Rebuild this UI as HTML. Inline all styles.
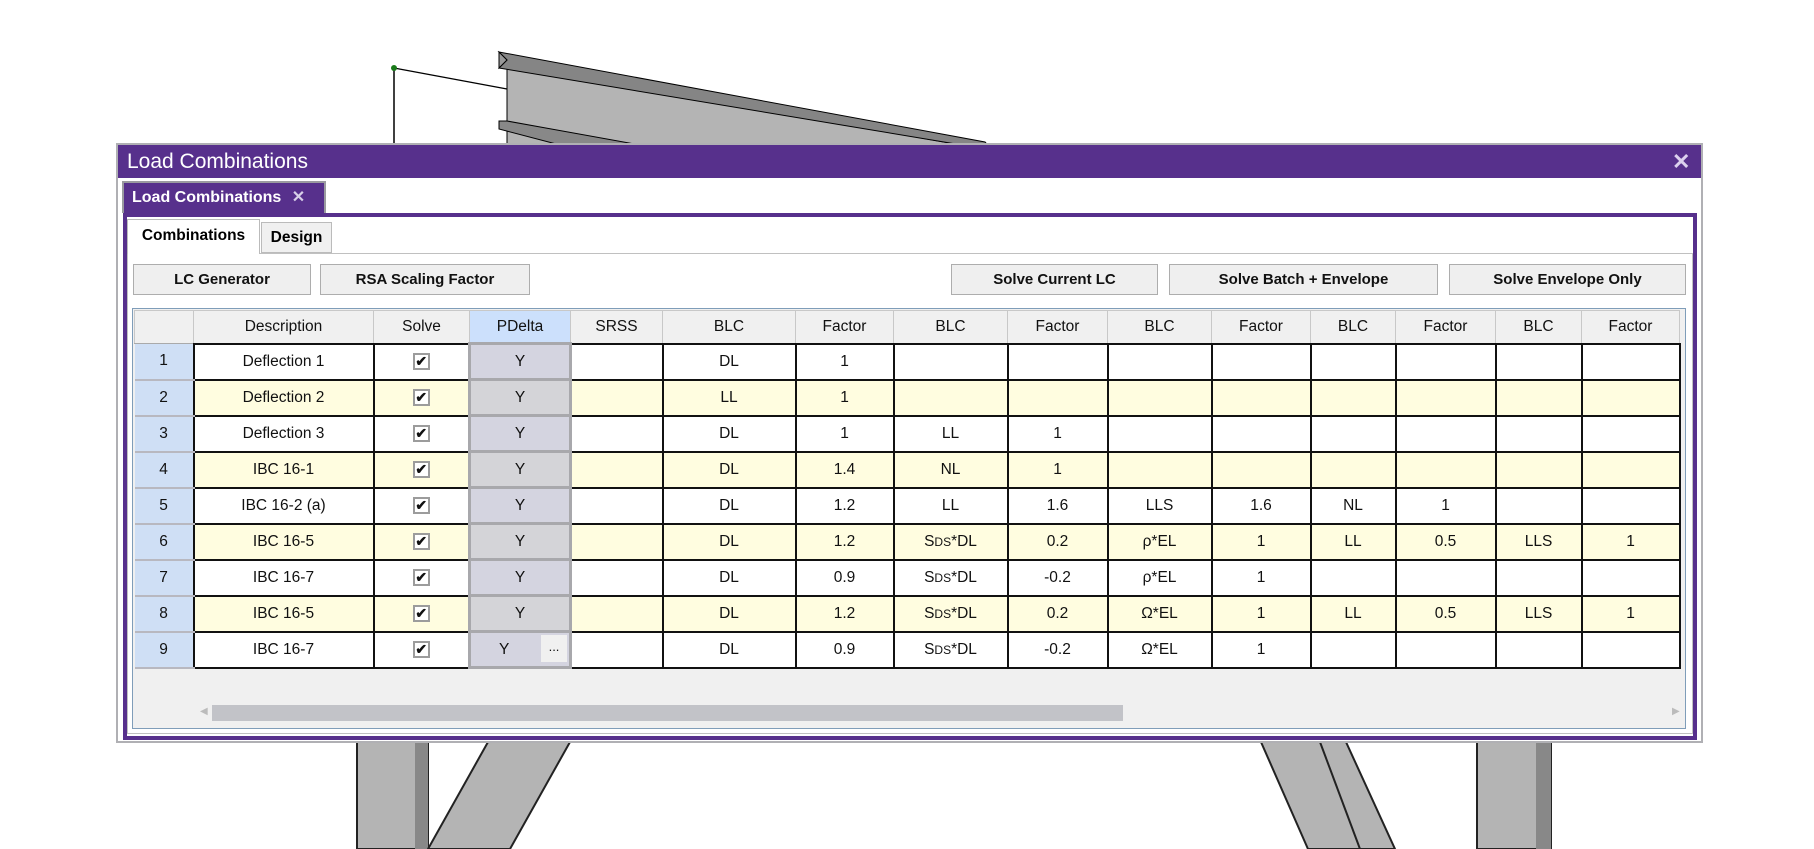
<!DOCTYPE html>
<html><head><meta charset="utf-8"><style>
*{box-sizing:border-box;margin:0;padding:0}
body{width:1814px;height:849px;background:#fff;position:relative;overflow:hidden;font-family:"Liberation Sans",sans-serif;}
.abs{position:absolute}
.btn{position:absolute;top:264px;height:31px;background:#efefef;border:1px solid #adadad;font-weight:bold;font-size:15px;display:flex;align-items:center;justify-content:center;color:#111}
table{border-collapse:collapse;table-layout:fixed;position:absolute;left:134px;top:310px}
td{height:36px;border:2px solid #111;text-align:center;font-size:15.5px;color:#111;padding:0;background:#fff}
tr.h td{height:33px;background:#f0f0f0;border:1px solid #c8c8c8;border-bottom:1px solid #aaa}
td.n{background:#cfdff5;border:none;border-bottom:2px solid #b8b8c0;border-right:1px solid #bbb}
tr.h td.n{background:#f0f0f0}
td.p{background:#d4d4e0;border:3px solid #a8a8ac}
tr.y td{background:#fffde0}
tr.y td.n{background:#cfdff5}
tr.y td.p{background:#d4d4d8}
.cb{display:inline-block;width:17px;height:17px;border:2px solid #9c9c9c;background:#fff;font-size:14px;line-height:13px;font-weight:bold;vertical-align:middle}
</style></head><body>
<svg class="abs" style="left:0;top:0" width="1814" height="849">
<line x1="394" y1="68" x2="394" y2="145" stroke="#000" stroke-width="1.5"/>
<line x1="394" y1="68" x2="507" y2="89" stroke="#000" stroke-width="1.2"/>
<circle cx="394" cy="68" r="3" fill="#1a7a1a"/>
<polygon points="507,64 1000,152 1000,145 507,145" fill="#b4b4b4" stroke="#000"/>
<polygon points="499,52 985,142 992,150 499,68 507,60" fill="#858585" stroke="#000"/>
<polygon points="499,52 507,60 499,68" fill="#999" stroke="#000"/>
<polygon points="499,121 507,121 640,145 560,145 499,129" fill="#888" stroke="#000"/>
<rect x="357" y="742" width="71" height="107" fill="#b4b4b4" stroke="#222" stroke-width="2"/>
<rect x="415" y="742" width="13" height="107" fill="#888"/>
<polygon points="488,742 570,742 510,849 428,849" fill="#b4b4b4" stroke="#222" stroke-width="2"/>
<polygon points="1261,742 1346,742 1395,849 1308,849" fill="#b4b4b4" stroke="#222" stroke-width="2"/>
<line x1="1320" y1="742" x2="1360" y2="849" stroke="#222" stroke-width="2"/>
<rect x="1477" y="742" width="74" height="107" fill="#b4b4b4" stroke="#222" stroke-width="2"/>
<rect x="1536" y="742" width="15" height="107" fill="#888"/>
</svg>
<div class="abs" style="left:116px;top:143px;width:1587px;height:600px;background:#fff;border:2px solid #b0b0b4"></div>
<div class="abs" style="left:118px;top:145px;width:1583px;height:33px;background:#57308c;color:#fff;font-size:21px;padding-left:9px;line-height:33px;font-weight:300">Load Combinations</div>
<div class="abs" style="left:1672px;top:145px;color:#dcd0ee;font-size:22px;line-height:33px;font-weight:bold">✕</div>
<div class="abs" style="left:122px;top:181px;width:204px;height:32px;background:#57308c;border:2px solid #9a9aa0;border-bottom:none;color:#fff;font-weight:bold;font-size:16px;line-height:30px;padding-left:8px">Load Combinations <span style="color:#d8d0e8;margin-left:6px">✕</span></div>
<div class="abs" style="left:123px;top:213px;width:1574px;height:527px;border:4px solid #57308c;background:#fff"></div>
<div class="abs" style="left:127px;top:253px;width:1566px;height:481px;border:1px solid #c0c0c0;background:#fff"></div>
<div class="abs" style="left:127px;top:219px;width:133px;height:35px;background:#fff;border:1px solid #bbb;border-bottom:none;font-weight:bold;font-size:15.5px;line-height:32px;text-align:center">Combinations</div>
<div class="abs" style="left:261px;top:222px;width:71px;height:31px;background:#f0f0f0;border:1px solid #bbb;font-weight:bold;font-size:15.5px;line-height:30px;text-align:center">Design</div>
<div class="btn" style="left:133px;width:178px">LC Generator</div>
<div class="btn" style="left:320px;width:210px">RSA Scaling Factor</div>
<div class="btn" style="left:951px;width:207px">Solve Current LC</div>
<div class="btn" style="left:1169px;width:269px">Solve Batch + Envelope</div>
<div class="btn" style="left:1449px;width:237px">Solve Envelope Only</div>
<div class="abs" style="left:132px;top:308px;width:1554px;height:421px;background:#f0f0f0;border:1px solid #7f9db9"></div>
<div class="abs" style="left:212px;top:705px;width:911px;height:16px;background:#c2c3c8"></div>
<div class="abs" style="left:200px;top:706px;color:#bbb;font-size:10px">◀</div>
<div class="abs" style="left:1672px;top:706px;color:#bbb;font-size:10px">▶</div>
<table>
<colgroup><col style="width:59px"><col style="width:180px"><col style="width:96px"><col style="width:101px"><col style="width:92px"><col style="width:133px"><col style="width:98px"><col style="width:114px"><col style="width:100px"><col style="width:104px"><col style="width:99px"><col style="width:85px"><col style="width:100px"><col style="width:86px"><col style="width:98px"></colgroup>
<tr class="h"><td class="n"></td><td>Description</td><td>Solve</td><td style="background:#cce0fc">PDelta</td><td>SRSS</td><td>BLC</td><td>Factor</td><td>BLC</td><td>Factor</td><td>BLC</td><td>Factor</td><td>BLC</td><td>Factor</td><td>BLC</td><td>Factor</td></tr>
<tr><td class="n">1</td><td>Deflection 1</td><td><span class="cb">✔</span></td><td class="p">Y</td><td></td><td>DL</td><td>1</td><td></td><td></td><td></td><td></td><td></td><td></td><td></td><td></td></tr>
<tr class="y"><td class="n">2</td><td>Deflection 2</td><td><span class="cb">✔</span></td><td class="p">Y</td><td></td><td>LL</td><td>1</td><td></td><td></td><td></td><td></td><td></td><td></td><td></td><td></td></tr>
<tr><td class="n">3</td><td>Deflection 3</td><td><span class="cb">✔</span></td><td class="p">Y</td><td></td><td>DL</td><td>1</td><td>LL</td><td>1</td><td></td><td></td><td></td><td></td><td></td><td></td></tr>
<tr class="y"><td class="n">4</td><td>IBC 16-1</td><td><span class="cb">✔</span></td><td class="p">Y</td><td></td><td>DL</td><td>1.4</td><td>NL</td><td>1</td><td></td><td></td><td></td><td></td><td></td><td></td></tr>
<tr><td class="n">5</td><td>IBC 16-2 (a)</td><td><span class="cb">✔</span></td><td class="p">Y</td><td></td><td>DL</td><td>1.2</td><td>LL</td><td>1.6</td><td>LLS</td><td>1.6</td><td>NL</td><td>1</td><td></td><td></td></tr>
<tr class="y"><td class="n">6</td><td>IBC 16-5</td><td><span class="cb">✔</span></td><td class="p">Y</td><td></td><td>DL</td><td>1.2</td><td>S<span style="font-size:12px">DS</span>*DL</td><td>0.2</td><td>ρ*EL</td><td>1</td><td>LL</td><td>0.5</td><td>LLS</td><td>1</td></tr>
<tr><td class="n">7</td><td>IBC 16-7</td><td><span class="cb">✔</span></td><td class="p">Y</td><td></td><td>DL</td><td>0.9</td><td>S<span style="font-size:12px">DS</span>*DL</td><td>-0.2</td><td>ρ*EL</td><td>1</td><td></td><td></td><td></td><td></td></tr>
<tr class="y"><td class="n">8</td><td>IBC 16-5</td><td><span class="cb">✔</span></td><td class="p">Y</td><td></td><td>DL</td><td>1.2</td><td>S<span style="font-size:12px">DS</span>*DL</td><td>0.2</td><td>Ω*EL</td><td>1</td><td>LL</td><td>0.5</td><td>LLS</td><td>1</td></tr>
<tr><td class="n">9</td><td>IBC 16-7</td><td><span class="cb">✔</span></td><td class="p" style="text-align:left;padding-left:28px;position:relative">Y<span style="position:absolute;right:2px;top:2px;width:26px;height:27px;background:#f0f0f0;font-size:13px;line-height:24px;text-align:center">...</span></td><td></td><td>DL</td><td>0.9</td><td>S<span style="font-size:12px">DS</span>*DL</td><td>-0.2</td><td>Ω*EL</td><td>1</td><td></td><td></td><td></td><td></td></tr>
</table>
</body></html>
